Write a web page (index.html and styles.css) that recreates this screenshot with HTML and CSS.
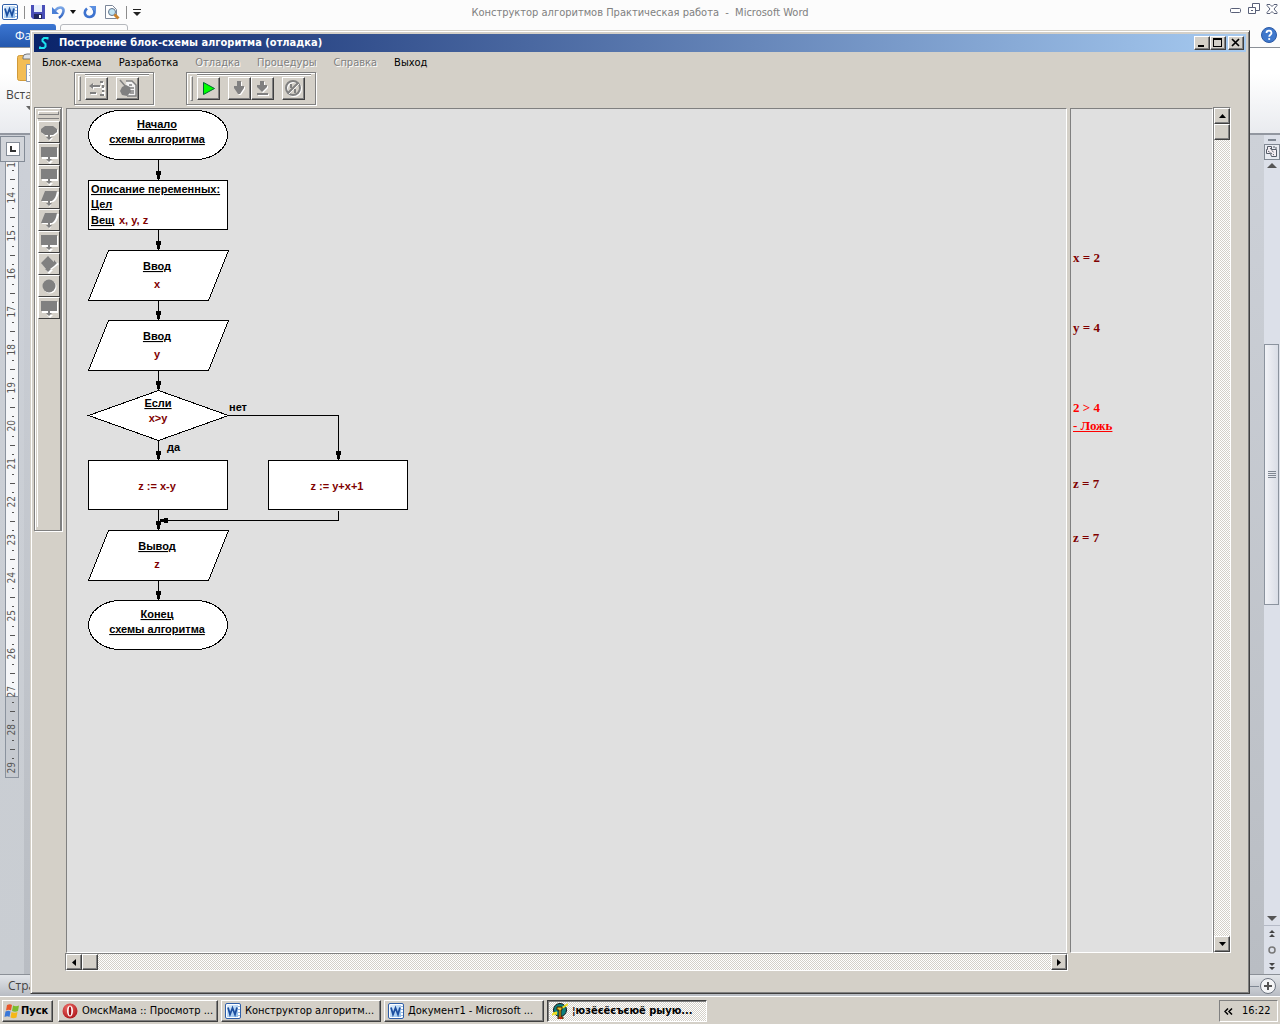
FILE: index.html
```html
<!DOCTYPE html>
<html lang="ru">
<head>
<meta charset="utf-8">
<title>Построение блок-схемы алгоритма</title>
<link rel="stylesheet" href="styles.css">
</head>
<body>
<svg width="0" height="0" class="defs" aria-hidden="true">
  <defs>
    <linearGradient id="wordBlue" x1="0" y1="0" x2="1" y2="1"><stop offset="0" stop-color="#e4f1fd"/><stop offset="1" stop-color="#8fbdec"/></linearGradient>
    <linearGradient id="arrowBlue" x1="0" y1="0" x2="0" y2="1"><stop offset="0" stop-color="#7aa6e6"/><stop offset="1" stop-color="#2c5fc0"/></linearGradient>
    <radialGradient id="operaRed" cx=".4" cy=".3" r=".8"><stop offset="0" stop-color="#f0706a"/><stop offset="1" stop-color="#a80d12"/></radialGradient>
    <symbol id="word" viewBox="0 0 16 16">
      <rect x=".5" y=".5" width="15" height="15" rx="1.5" fill="#fff" stroke="#2f5fa8"/>
      <rect x="2" y="2" width="11" height="12" fill="url(#wordBlue)"/>
      <path d="M13 3.500h2M13 6.500h2M13 9.500h2M13 12.500h2" stroke="#9bb8dc"/>
      <path d="M3 4.500L5 11.500L7.500 5L10 11.500L12 4.500" fill="none" stroke="#1c4fa0" stroke-width="1.800"/>
    </symbol>
    <symbol id="rect" viewBox="0 0 20 20">
      <path d="M2 3h16v11H2z M9 14h2v2h2l-3 3-3-3h2z" fill="#fff" transform="translate(1 1)"/>
      <path d="M2 3h16v10H2z M9 13h2v2h2l-3 3-3-3h2z" fill="#808080"/>
    </symbol>
    <symbol id="para" viewBox="0 0 20 20">
      <path d="M6 3h13c-1 5-3 9-6 10h-2v2l-1 3-3-3h1v-2H2z" fill="#fff" transform="translate(1 1)"/>
      <path d="M6 3h12c-1 5-2 8-5 10H2z M9 13h2v2h2l-3 3-3-3h2z" fill="#808080"/>
    </symbol>
  </defs>
</svg>

<div class="desktop">
  <section class="word">
    <header class="word-title">
      <div class="quick">
        <svg width="16" height="16"><use href="#word"/></svg>
        <i class="sep"></i>
        <svg width="14" height="14" viewBox="0 0 14 14"><path d="M0 0h14v14H2l-2-2z" fill="#4a4fb8"/><path d="M3 0h8v7H3z" fill="#e6eefb"/><path d="M3 9h8v5H3z" fill="#22285e"/><path d="M8 10h2v3H8z" fill="#fff"/></svg>
        <svg width="24" height="16" viewBox="0 0 24 16"><path d="M3 6.500C8 1 13 4 11 9c-.5 2-2 3.500-4 5" fill="none" stroke="url(#arrowBlue)" stroke-width="2.600"/><path d="M0 3v7h7z" fill="#4a7fd6"/><path d="M18 6h6l-3 4z" fill="#111"/></svg>
        <svg width="14" height="14" viewBox="0 0 14 14"><path d="M4 3.500C0 7 2 12 6.500 12S13 7 10 3.500" fill="none" stroke="#3d73cf" stroke-width="2.600"/><path d="M6 1h7v6z" fill="#5b8fe0"/></svg>
        <svg width="16" height="16" viewBox="0 0 16 16"><path d="M1.500 1.500h7l4 4v9h-11z" fill="#fff" stroke="#7b8698"/><circle cx="8" cy="8" r="3.500" fill="#bfe3f2" stroke="#64748a"/><path d="M10.500 10.500l4 4" stroke="#c9812a" stroke-width="3"/></svg>
        <i class="sep"></i>
        <svg width="8" height="8" viewBox="0 0 8 8"><path d="M0 1.500h8" stroke="#222"/><path d="M0 4h8L4 8z" fill="#222"/></svg>
      </div>
      <h2>Конструктор алгоритмов Практическая работа &nbsp;- &nbsp;Microsoft Word</h2>
      <div class="word-ctl">
        <svg width="12" height="12" viewBox="0 0 12 12"><rect x=".5" y="5.500" width="10" height="4" rx="1" fill="#fff" stroke="#596078"/></svg>
        <svg width="12" height="12" viewBox="0 0 12 12" fill="#fff" stroke="#596078"><path d="M4.500.5h7v7h-7z"/><path d="M.5 4.500h7v6h-7z"/><path d="M3 7.500h2"/></svg>
        <svg width="12" height="12" viewBox="0 0 12 12"><path d="M1 1.500h3l2 2 2-2h3v1L8 6l3 3.500v1H8l-2-2-2 2H1v-1L4 6 1 2.500z" fill="#fff" stroke="#596078"/></svg>
      </div>
    </header>
    <div class="tabs">
      <button class="file" type="button">Файл</button>
      <span class="tab"></span>
      <svg class="help" width="16" height="16" viewBox="0 0 16 16"><circle cx="8" cy="8" r="7.500" fill="#3f78cc" stroke="#2c5aa5"/><path d="M5.500 6c0-3.200 5-3.200 5 0 0 1.800-2.300 1.800-2.300 3.800" fill="none" stroke="#fff" stroke-width="1.800"/><circle cx="8.200" cy="12" r="1.100" fill="#fff"/></svg>
    </div>
    <div class="ribbon">
      <svg width="26" height="32" viewBox="0 0 26 32"><rect x=".5" y="3.500" width="25" height="25" rx="2" fill="#f3bd55" stroke="#d09a3a"/><path d="M6 5q0-3 4-3h10v5H6z" fill="#dfe3e8" stroke="#777"/><path d="M9.500 12.500h16v17h-16z" fill="#fff" stroke="#8b9bb5"/><path d="M12 17.500h12M12 20.500h12M12 23.500h12" stroke="#a9b6cc"/></svg>
      <span>Вставить</span>
      <svg width="7" height="4" viewBox="0 0 7 4"><path d="M0 0h7L3.500 4z" fill="#666"/></svg>
    </div>
    <div class="work">
      <aside class="gutter">
        <span class="tabstop"><svg width="14" height="14" viewBox="0 0 14 14"><rect x=".5" y=".5" width="13" height="13" fill="#fff" stroke="#838b96"/><path d="M5 4v5h5" fill="none" stroke="#333" stroke-width="2"/></svg></span>
        <ol class="ruler">
          <li class="first"><span>1</span></li><li><span>14</span></li><li><span>15</span></li><li><span>16</span></li><li><span>17</span></li><li><span>18</span></li><li><span>19</span></li><li><span>20</span></li><li><span>21</span></li><li><span>22</span></li><li><span>23</span></li><li><span>24</span></li><li><span>25</span></li><li><span>26</span></li><li><span>27</span></li><li><span>28</span></li><li><span>29</span></li>
        </ol>
      </aside>
      <div class="word-scroll">
        <i class="split"></i>
        <svg width="16" height="16" viewBox="0 0 16 16"><rect x=".5" y=".5" width="15" height="15" fill="#e8ebf1" stroke="#7f8792"/><path d="M3.500 2.500h4v3h5v7h-5l-1-3h-4v-4h1z" fill="#f6f0f4" stroke="#555c68"/><path d="M6 4l4 5M4 7l6 4M9 3h3v2" fill="none" stroke="#555c68" stroke-dasharray="2 1"/></svg>
        <svg width="10" height="6" viewBox="0 0 10 6"><path d="M0 5h10L5 0z" fill="#555"/></svg>
        <div class="track"><div class="thumb"><i></i><i></i><i></i><i></i></div></div>
        <svg width="10" height="6" viewBox="0 0 10 6"><path d="M0 0h10L5 5z" fill="#555"/></svg>
        <div class="browse">
          <svg width="8" height="8" viewBox="0 0 8 8"><path d="M1 3h6L4 0zM1 7h6L4 4z" fill="#444"/></svg>
          <svg width="8" height="8" viewBox="0 0 8 8"><circle cx="4" cy="4" r="3" fill="none" stroke="#777" stroke-width="1.500"/></svg>
          <svg width="8" height="8" viewBox="0 0 8 8"><path d="M1 1h6L4 4zM1 5h6L4 8z" fill="#444"/></svg>
        </div>
      </div>
    </div>
    <footer class="status">
      <span>Страница</span>
      <svg width="30" height="20" viewBox="0 0 30 20"><path d="M0 10.500h11" stroke="#7f8792"/><circle cx="20" cy="10" r="7.500" fill="#f4f5f7" stroke="#6d7480"/><path d="M16 10h8M20 6v8" stroke="#555" stroke-width="2"/></svg>
    </footer>
  </section>

  <main class="app">
    <header class="caption">
      <svg width="16" height="16" viewBox="0 0 16 16"><path d="M11.500 4.500V3H8L6.500 4.500V6L9.500 9v2.500L8 13H4v-1.500" fill="none" stroke="#1ce4f0" stroke-width="2"/></svg>
      <h1>Построение блок-схемы алгоритма (отладка)</h1>
      <button type="button" aria-label="Свернуть"><svg width="12" height="10" viewBox="0 0 12 10"><path d="M2 7h6v2H2z"/></svg></button>
      <button type="button" aria-label="Развернуть"><svg width="12" height="10" viewBox="0 0 12 10"><path d="M1 0h9v9H1zM2 2v6h7V2z" fill-rule="evenodd"/></svg></button>
      <button type="button" class="close" aria-label="Закрыть"><svg width="12" height="10" viewBox="0 0 12 10"><path d="M2 1l7 7M9 1L2 8" stroke="#000" stroke-width="1.700"/></svg></button>
    </header>
    <nav class="menu">
      <button type="button">Блок-схема</button>
      <button type="button">Разработка</button>
      <button type="button" disabled>Отладка</button>
      <button type="button" disabled>Процедуры</button>
      <button type="button" disabled>Справка</button>
      <button type="button">Выход</button>
    </nav>
    <div class="toolbars">
      <div class="toolbar edit">
        <i class="grip"></i>
        <div class="tools">
          <button type="button" aria-label="Вставка"><svg width="19" height="19" viewBox="0 0 19 19"><g fill="#fff" transform="translate(1 1)"><path d="M2 7l4-3v2h7v2H6v2zM3 13h6v2H3zM13 2h3v3h-3zM14 7h3v3h-3zM14 12h3v4h-3z"/></g><path d="M2 7l4-3v2h7v2H6v2zM3 13h6v2H3zM13 2h3v2h-3zM15 6h2v3h-2zM15 11h2v2h-2zM13 15h4v2h-4z" fill="#808080"/></svg></button>
          <button type="button" class="apart" aria-label="Правка"><svg width="19" height="19" viewBox="0 0 19 19"><path d="M8 2h6l4 4v11H9" fill="#f4f4f4" stroke="#808080" stroke-width="1.500"/><path d="M2 1l6 7M11 6h3M11 9h5M12 12h4M12 14h4" stroke="#808080" stroke-width="1.500"/><path d="M4 8l4-2 4 2 1 5-4 4-5-1-2-4z" fill="#808080"/></svg></button>
        </div>
      </div>
      <div class="toolbar run">
        <i class="grip"></i>
        <div class="tools">
          <button type="button" aria-label="Пуск отладки"><svg width="19" height="19" viewBox="0 0 19 19"><path d="M4.500 3.500v12l11-6z" fill="#0f0" stroke="#063"/></svg></button>
          <button type="button" class="apart" aria-label="Шаг"><svg width="19" height="19" viewBox="0 0 19 19"><path d="M7 2h4v5h3v2l-4 6H8L4 9V7h3z" fill="#fff" transform="translate(1 1)"/><path d="M7 2h4v5h3v2l-4 6H8L4 9V7h3z" fill="#808080"/></svg></button>
          <button type="button" aria-label="Шаг до конца"><svg width="19" height="19" viewBox="0 0 19 19"><path d="M7 2h4v4h3v2l-5 5-5-5V6h3zM4 14h11v2H4z" fill="#fff" transform="translate(1 1)"/><path d="M7 2h4v4h3v2l-5 5-5-5V6h3zM4 14h11v2H4z" fill="#808080"/></svg></button>
          <button type="button" class="apart" aria-label="Стоп"><svg width="19" height="19" viewBox="0 0 19 19"><circle cx="10" cy="10" r="7" fill="none" stroke="#fff" stroke-width="2"/><circle cx="9" cy="9" r="7" fill="none" stroke="#808080" stroke-width="2"/><path d="M5 15L15 5" stroke="#fff"/><path d="M4 14L14 4" stroke="#808080" stroke-width="2"/><path d="M7 5v4M11 10v4" stroke="#808080" stroke-width="2"/></svg></button>
        </div>
      </div>
    </div>
    <div class="workspace">
      <aside class="palette">
        <i class="grip-h"></i>
        <div class="shapes">
          <button type="button" aria-label="Начало"><svg width="20" height="20" viewBox="0 0 20 20"><path d="M6 4h8l4 3v3l-4 3h-3v2h2l-3 3-3-3h2v-2H6l-4-3V7z" fill="#fff" transform="translate(1 1)"/><path d="M6 4h8l4 3v3l-4 3h-3v2h2l-3 3-3-3h2v-2H6l-4-3V7z" fill="#808080"/></svg></button>
          <button type="button" aria-label="Описание"><svg width="20" height="20"><use href="#rect"/></svg></button>
          <button type="button" aria-label="Присваивание"><svg width="20" height="20"><use href="#rect"/></svg></button>
          <button type="button" aria-label="Ввод"><svg width="20" height="20"><use href="#para"/></svg></button>
          <button type="button" aria-label="Вывод"><svg width="20" height="20"><use href="#para"/></svg></button>
          <button type="button" aria-label="Процедура"><svg width="20" height="20"><use href="#rect"/></svg></button>
          <button type="button" aria-label="Ветвление"><svg width="20" height="20" viewBox="0 0 20 20"><path d="M9 2l6 6V6l4 3-4 3-4 3h2l-4 4-3-4h1L2 9z" fill="#fff" transform="translate(1 1)"/><path d="M9 2l6 6V6l3 3-3 3-4 3h1l-3 3-3-3h1L2 9z" fill="#808080"/></svg></button>
          <button type="button" aria-label="Соединитель"><svg width="20" height="20" viewBox="0 0 20 20"><circle cx="11" cy="11" r="6.500" fill="#fff"/><circle cx="10" cy="10" r="6.500" fill="#808080"/></svg></button>
          <button type="button" aria-label="Блок"><svg width="20" height="20"><use href="#rect"/></svg></button>
        </div>
      </aside>
      <div class="canvas">
        <svg class="flow" width="360" height="560" viewBox="67 109 360 560">
          <g class="shape">
            <rect x="88.500" y="110.500" width="139" height="49" rx="32" ry="24.500"/>
            <rect x="88.500" y="180.500" width="139" height="49"/>
            <path d="M108.500 250.500h120l-20 50h-120z"/>
            <path d="M108.500 320.500h120l-20 50h-120z"/>
            <path d="M158.500 390.500l70 25-70 25-70-25z"/>
            <rect x="88.500" y="460.500" width="139" height="49"/>
            <rect x="268.500" y="460.500" width="139" height="49"/>
            <path d="M108.500 530.500h120l-20 50h-120z"/>
            <rect x="88.500" y="600.500" width="139" height="49" rx="32" ry="24.500"/>
          </g>
          <path class="wire" d="M158.500 160v20M158.500 230v20M158.500 301v19M158.500 371v19M158.500 441v19M158.500 510v20M158.500 581v19M228 415.500h110.500V460M338.500 511v9.500H160"/>
          <path class="tip" d="M156 171h5v4h-1v4h-3v-4h-1zM156 241h5v4h-1v4h-3v-4h-1zM156 311h5v4h-1v4h-3v-4h-1zM156 381h5v4h-1v4h-3v-4h-1zM156 451h5v4h-1v4h-3v-4h-1zM156 521h5v4h-1v4h-3v-4h-1zM156 591h5v4h-1v4h-3v-4h-1zM336 451h5v4h-1v4h-3v-4h-1zM168 518v5h-4v-1h-4v-3h4v-1z"/>
          <g class="kw mid">
            <text x="157" y="128">Начало</text><text x="157" y="143">схемы алгоритма</text>
            <text x="157" y="270">Ввод</text><text x="157" y="340">Ввод</text>
            <text x="158" y="407">Если</text><text x="157" y="550">Вывод</text>
            <text x="157" y="618">Конец</text><text x="157" y="633">схемы алгоритма</text>
          </g>
          <g class="kw"><text x="91" y="193">Описание переменных:</text><text x="91" y="208">Цел</text><text x="91" y="224">Вещ</text></g>
          <g class="expr"><text x="119" y="224">x, y, z</text></g>
          <g class="expr mid"><text x="157" y="288">x</text><text x="157" y="358">y</text><text x="158" y="422">x&gt;y</text><text x="157" y="490">z := x-y</text><text x="337" y="490">z := y+x+1</text><text x="157" y="568">z</text></g>
          <g><text x="229" y="411">нет</text><text x="167" y="451">да</text></g>
        </svg>
      </div>
      <div class="trace">
        <p class="in-x">x = 2</p>
        <p class="in-y">y = 4</p>
        <p class="test">2 &gt; 4<br><u>- Ложь</u></p>
        <p class="calc">z = 7</p>
        <p class="out">z = 7</p>
      </div>
      <div class="sb vert">
        <button type="button" aria-label="Вверх"><svg width="7" height="4" viewBox="0 0 7 4"><path d="M0 4h7L3.500 0z"/></svg></button>
        <span class="knob"></span><i class="fill"></i>
        <button type="button" aria-label="Вниз"><svg width="7" height="4" viewBox="0 0 7 4"><path d="M0 0h7L3.500 4z"/></svg></button>
      </div>
      <div class="sb horz">
        <button type="button" aria-label="Влево"><svg width="4" height="7" viewBox="0 0 4 7"><path d="M4 0v7L0 3.500z"/></svg></button>
        <span class="knob"></span><i class="fill"></i>
        <button type="button" aria-label="Вправо"><svg width="4" height="7" viewBox="0 0 4 7"><path d="M0 0v7l4-3.500z"/></svg></button>
      </div>
    </div>
  </main>

  <footer class="taskbar">
    <button type="button" class="start"><svg width="16" height="16" viewBox="0 0 16 16"><path d="M3 2q3-1.500 5 0L7 7.500q-2-1.500-5 0z" fill="#e8562a"/><path d="M9 2.500q3 1.500 6 0L14 8q-3 1.500-6 0z" fill="#7cbb2c"/><path d="M1.500 8.500q3-1.500 5 0L5.500 14q-2-1.500-5 0z" fill="#3a78d8"/><path d="M7.500 9q3 1.500 6 0l-1 5.500q-3 1.500-6 0z" fill="#f5b818"/></svg>Пуск</button>
    <button type="button" class="task"><svg width="16" height="16" viewBox="0 0 16 16"><circle cx="8" cy="8" r="7.500" fill="url(#operaRed)"/><ellipse cx="8" cy="8" rx="3" ry="5.500" fill="#fff"/><ellipse cx="8" cy="8" rx="1.300" ry="4.500" fill="#a51016"/></svg>ОмскМама :: Просмотр ...</button>
    <button type="button" class="task"><svg width="16" height="16"><use href="#word"/></svg>Конструктор алгоритм...</button>
    <button type="button" class="task"><svg width="16" height="16"><use href="#word"/></svg>Документ1 - Microsoft ...</button>
    <button type="button" class="task active"><svg width="16" height="16" viewBox="0 0 16 16"><circle cx="8" cy="7" r="6.500" fill="#0b8080" stroke="#111"/><path d="M0 12l5-3M10 5l6-4M1 10l4 1" stroke="#f0e020" stroke-width="2"/><path d="M5 4h5v3H9v7h2v2H6v-2h1V7H5z" fill="#e2c020" stroke="#402000"/><path d="M7 14h3v2H7z" fill="#c02010"/></svg>¦юзёєёєъєюё рыую...</button>
    <div class="tray"><svg width="9" height="7" viewBox="0 0 9 7"><path d="M4 .5L1 3.500l3 3M8 .5L5 3.500l3 3" fill="none" stroke="#000" stroke-width="1.500"/></svg><time>16:22</time></div>
  </footer>
</div>
</body>
</html>
```

FILE: styles.css
```css
:root {
  --face: #d4d0c8;
  --shade: #808080;
  --dark: #404040;
  --dither: repeating-conic-gradient(#fff 0 25%, #d4d0c8 0 50%) 0 0 / 2px 2px;
}
* { box-sizing: border-box; }
body {
  margin: 0;
  font: 11px/14px "DejaVu Sans Condensed", "DejaVu Sans", sans-serif;
  color: #000;
}
svg { display: block; flex: none; }
h1, h2, p, ol { margin: 0; padding: 0; }
button {
  margin: 0;
  padding: 0;
  border: 0;
  background: none;
  font: inherit;
  color: inherit;
}
.defs { position: absolute; }

.desktop {
  position: relative;
  display: flex;
  flex-direction: column;
  min-height: 100vh;
}

/* Word window behind */
.word {
  flex: 1;
  display: flex;
  flex-direction: column;
  overflow: hidden;
  background: #fcfcfc;
}
.word-title {
  display: grid;
  grid-template-columns: 1fr auto 1fr;
  align-items: center;
  height: 24px;
  padding: 0 2px;
}
.word-title h2 { padding-top: 2px; font-size: 11px; font-weight: 400; color: #808080; }
.quick { display: flex; align-items: center; gap: 7px; }
.sep { width: 1px; height: 13px; background: #8c8c8c; }
.quick .sep { margin: 0 -1px; }
.word-ctl { display: flex; justify-content: flex-end; gap: 6px; padding-bottom: 6px; }
.tabs { display: flex; height: 24px; border-bottom: 1px solid #8b9097; }
.file {
  width: 56px;
  padding-left: 15px;
  text-align: left;
  color: #fff;
  font: 12px/22px "Open Sans", sans-serif;
  background: linear-gradient(#3b76d2, #2458ae);
  border-radius: 3px 3px 0 0;
}
.tab { width: 68px; margin-left: 4px; border: 1px solid #b5b8bd; border-radius: 3px 3px 0 0; }
.help { margin: 3px 3px 0 auto; }
.ribbon {
  height: 87px;
  padding: 4px 6px;
  font: 12px/18px "Open Sans", sans-serif;
  color: #444;
  background: linear-gradient(#fff 30%, #e9ebef);
  border-bottom: 2px solid #9297a0;
}
.ribbon svg:first-child { margin: 0 0 2px 11px; }
.ribbon svg:last-child { margin: 2px 0 0 20px; }
.work {
  flex: 1;
  display: flex;
  justify-content: space-between;
  background: linear-gradient(#cdd1d8, #b9bdc3);
}
.gutter { width: 24px; background: linear-gradient(#ccd0d7, #c9cdd2); }
.tabstop {
  display: flex;
  align-items: center;
  justify-content: center;
  width: 25px;
  height: 26px;
  margin-top: 1px;
  border: 1px solid #838b96;
  background: #d2d5da;
}
.ruler {
  width: 14px;
  height: 616px;
  margin-left: 5px;
  overflow: hidden;
  list-style: none;
  border: 1px solid #8b939e;
  border-top: 0;
  background: linear-gradient(#f5f6f8 534px, #8b939e 534px 535px, #c6cad0 535px);
}
.ruler li {
  display: flex;
  align-items: center;
  justify-content: center;
  height: 38px;
  color: #555;
  background:
    linear-gradient(#555, #555) 4px 0 / 5px 1px no-repeat,
    linear-gradient(#555, #555) 6px 9px / 2px 1px no-repeat,
    linear-gradient(#555, #555) 6px 29px / 2px 1px no-repeat;
}
.ruler .first {
  align-items: flex-start;
  height: 17px;
  background: linear-gradient(#555, #555) 6px 8px / 2px 1px no-repeat;
}
.ruler span { writing-mode: vertical-rl; rotate: 180deg; font-size: 10px; line-height: 12px; }
.word-scroll {
  display: flex;
  flex-direction: column;
  align-items: center;
  width: 16px;
  padding-top: 4px;
  gap: 3px;
  background: #dce0e9;
}
.split { width: 8px; height: 2px; background: #7f8792; }
.track { flex: 1; width: 100%; padding-top: 172px; }
.thumb {
  display: flex;
  flex-direction: column;
  align-items: center;
  justify-content: center;
  gap: 1px;
  width: 15px;
  height: 261px;
  border: 1px solid #8b939e;
  background: linear-gradient(90deg, #f2f3f7, #d9dde6);
}
.thumb i { width: 8px; height: 1px; background: #7f8792; }
.browse {
  display: flex;
  flex-direction: column;
  align-items: center;
  gap: 8px;
  width: 100%;
  padding: 4px 0;
  border-top: 1px solid #b5bac6;
}
.status {
  display: flex;
  align-items: center;
  justify-content: space-between;
  height: 22px;
  padding: 0 2px 0 8px;
  font: 12px/20px "Open Sans", sans-serif;
  color: #444;
  border-top: 1px solid #8b9097;
  background: linear-gradient(#e2e5e9, #b8bcc3);
}

/* Application window */
.app {
  position: absolute;
  inset: 30px 30px 30px 30px;
  display: flex;
  flex-direction: column;
  padding: 2px;
  background: var(--face);
  border: 1px solid;
  border-color: var(--face) var(--dark) var(--dark) var(--face);
  box-shadow: inset 1px 1px #fff, inset -1px -1px var(--shade);
}
.caption {
  display: flex;
  align-items: center;
  height: 18px;
  margin: 1px 1px 0 1px;
  padding: 0 2px;
  color: #fff;
  background: linear-gradient(90deg, #0a246a, #a6caf0);
}
.caption h1 { flex: 1; margin-left: 7px; font-size: 11px; line-height: 14px; }
.caption button, .sb button, .knob, .start, .task {
  background: var(--face);
  border: 1px solid;
  border-color: #fff var(--dark) var(--dark) #fff;
  box-shadow: inset -1px -1px var(--shade);
}
.caption button { display: flex; align-items: center; justify-content: center; width: 16px; height: 14px; }
.caption .close { margin-left: 2px; }
.menu { display: flex; gap: 17px; height: 20px; padding: 1px 0 0 9px; }
.menu button:disabled { color: var(--shade); text-shadow: 1px 1px #fff; }
.toolbars { display: flex; gap: 32px; padding-left: 41px; }
.toolbar {
  display: flex;
  gap: 4px;
  height: 33px;
  padding: 1px 4px 1px 3px;
  border: 1px solid var(--shade);
  box-shadow: inset 1px 1px #fff, 1px 1px #fff;
}
.edit { width: 80px; }
.run { width: 130px; }
.grip { width: 3px; margin: 2px 0; border: 1px solid; border-color: #fff var(--shade) var(--shade) #fff; }
.tools { flex: 1; display: flex; padding-top: 2px; border-top: 1px solid var(--shade); box-shadow: inset 0 1px #fff; }
.tools button {
  display: flex;
  align-items: center;
  justify-content: center;
  width: 23px;
  height: 23px;
  border: 1px solid;
  border-color: #fff var(--dark) var(--dark) #fff;
  box-shadow: inset -1px -1px var(--shade);
}
.tools .apart { margin-left: 8px; }

.workspace {
  flex: 1;
  display: grid;
  grid-template: 1fr 18px / 28px minmax(0, 1fr) 143px 18px;
  padding: 2px 16px 20px 1px;
}
.palette {
  grid-row: 1 / 3;
  align-self: start;
  height: 424px;
  padding: 3px 2px 0 2px;
  border: 1px solid var(--shade);
  box-shadow: inset 1px 1px #fff, inset -1px 0 var(--shade), 1px 1px #fff;
}
.grip-h { display: block; height: 4px; margin: 0 0 3px 1px; border: 1px solid; border-color: #fff var(--shade) var(--shade) #fff; }
.shapes { padding-top: 2px; border-top: 1px solid var(--shade); border-left: 1px solid #fff; height: 409px; }
.shapes button {
  display: block;
  width: 22px;
  height: 22px;
  border: 1px solid;
  border-color: #fff var(--dark) var(--dark) #fff;
}
.canvas, .trace {
  margin-top: 1px;
  background: #e0e0e0;
  border: 1px solid;
  border-color: var(--shade) #fff #fff var(--shade);
}
.canvas { margin-left: 4px; margin-right: 3px; overflow: hidden; }
.flow { font: bold 11px "Liberation Sans", Arial, sans-serif; }
.shape { fill: #fff; stroke: #000; shape-rendering: crispEdges; }
.wire { fill: none; stroke: #000; shape-rendering: crispEdges; }
.tip { shape-rendering: crispEdges; }
.mid { text-anchor: middle; }
.kw { text-decoration: underline; }
.expr { fill: #800000; }
.trace { padding-left: 2px; font: bold 13px/18px "Liberation Serif", "Times New Roman", serif; color: #800000; }
.in-x { padding-top: 140px; }
.in-y { padding-top: 52px; }
.test { padding-top: 62px; color: #f00; }
.calc { padding-top: 40px; }
.out { padding-top: 36px; }
.sb { display: flex; background: var(--dither); border: 1px solid; border-color: var(--shade) #fff #fff var(--shade); }
.sb button, .knob { display: flex; align-items: center; justify-content: center; width: 16px; height: 16px; }
.fill { flex: 1; }
.vert { flex-direction: column; }
.horz { grid-column: 2; margin-left: 3px; margin-right: 2px; }

/* Taskbar */
.taskbar {
  display: flex;
  gap: 3px;
  height: 28px;
  padding: 3px 2px 2px;
  background: var(--face);
  border-top: 1px solid #fff;
}
.start, .task { display: flex; align-items: center; gap: 4px; height: 22px; padding: 0 3px; white-space: nowrap; }
.start { width: 51px; gap: 1px; padding: 0 1px; margin-right: 2px; font-weight: 700; }
.task { width: 160px; overflow: hidden; }
.task.active {
  padding-left: 4px;
  font-weight: 700;
  background: var(--dither);
  border-color: var(--dark) #fff #fff var(--dark);
  box-shadow: inset 1px 1px var(--shade);
}
.tray {
  display: flex;
  align-items: center;
  gap: 9px;
  width: 59px;
  height: 22px;
  margin-left: auto;
  padding-left: 4px;
  border: 1px solid;
  border-color: var(--shade) #fff #fff var(--shade);
}
```
